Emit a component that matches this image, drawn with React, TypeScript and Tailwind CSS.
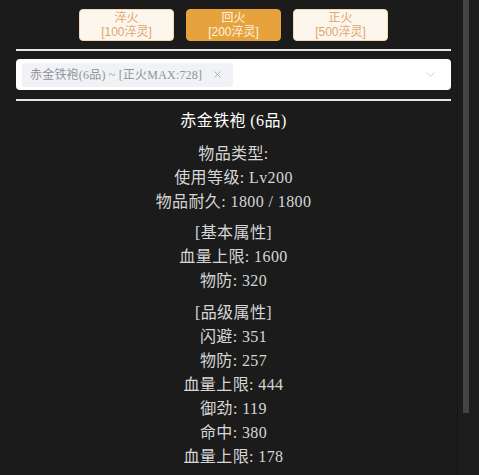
import { ChevronDown, X } from "lucide-react";

type Level = {
  name: string;
  cost: string;
  active?: boolean;
};

const levels: Level[] = [
  { name: "淬火", cost: "[100淬灵]" },
  { name: "回火", cost: "[200淬灵]", active: true },
  { name: "正火", cost: "[500淬灵]" },
];

const groups: string[][] = [
  ["物品类型:", "使用等级: Lv200", "物品耐久: 1800 / 1800"],
  ["[基本属性]", "血量上限: 1600", "物防: 320"],
  [
    "[品级属性]",
    "闪避: 351",
    "物防: 257",
    "血量上限: 444",
    "御劲: 119",
    "命中: 380",
    "血量上限: 178",
  ],
];

export default function App() {
  return (
    <div
      className="relative h-[475px] w-full overflow-hidden bg-[#1b1b1b]"
      style={{ fontFamily: '"Liberation Serif", "Noto Sans CJK SC", serif' }}
    >
      <div className="h-full overflow-y-auto pl-4 pr-[28px] pt-[9px] pb-[77px]">
        {/* LEVEL BUTTONS */}
        <div className="flex justify-center gap-3 font-['Liberation_Sans','Noto_Sans_CJK_SC',sans-serif]">
          {levels.map((l) => (
            <button
              key={l.name}
              className={
                l.active
                  ? "flex h-[32px] w-[95px] flex-col items-center justify-center rounded-[4px] border border-[#e6a23c] bg-[#e6a23c] text-[12px] leading-[14px] text-[#fff3e0]"
                  : "flex h-[32px] w-[95px] flex-col items-center justify-center rounded-[4px] border border-[#f5dab1] bg-[#fdf6ec] text-[12px] leading-[14px] text-[#e0a66a]"
              }
            >
              <span>{l.name}</span>
              <span>{l.cost}</span>
            </button>
          ))}
        </div>

        <div className="mt-2 h-[2px] bg-[#e6e6e6]" />

        {/* SELECT */}
        <div className="mt-2 flex h-[31px] items-center rounded-[4px] bg-white pl-[6px] pr-[13px]">
          <div className="flex h-[24px] items-center gap-[10px] rounded-[3px] bg-[#f0f2f5] pl-2 pr-[10px] text-[12px] tracking-[0.2px] text-[#909399]">
            <span>赤金铁袍(6品) ~ [正火MAX:728]</span>
            <X size={11} strokeWidth={1.5} />
          </div>
          <div className="flex-1" />
          <ChevronDown size={15} strokeWidth={1} className="text-[#b4b8c0]" />
        </div>

        <div className="mt-[9px] h-[2px] bg-[#e6e6e6]" />

        {/* ITEM INFO */}
        <div className="mt-2 whitespace-pre text-center text-[16px] leading-[24px] tracking-[0.4px]">
          <div className="text-white">赤金铁袍 (6品)</div>
          <div className="mt-[9px] flex flex-col gap-2 text-[#d6d6d6]">
            {groups.map((g, i) => (
              <div key={i} className={i === 1 ? "-mt-[1px]" : ""}>
                {g.map((row, j) => (
                  <div key={j}>{row}</div>
                ))}
              </div>
            ))}
          </div>
        </div>
      </div>

      {/* SCROLLBAR */}
      <div className="absolute right-0 top-0 h-full w-[22px] border-l border-[#161616] bg-[#1d1d1d]">
        <div className="ml-[5px] h-[413px] w-[6px] bg-[#444444]" />
      </div>
    </div>
  );
}
